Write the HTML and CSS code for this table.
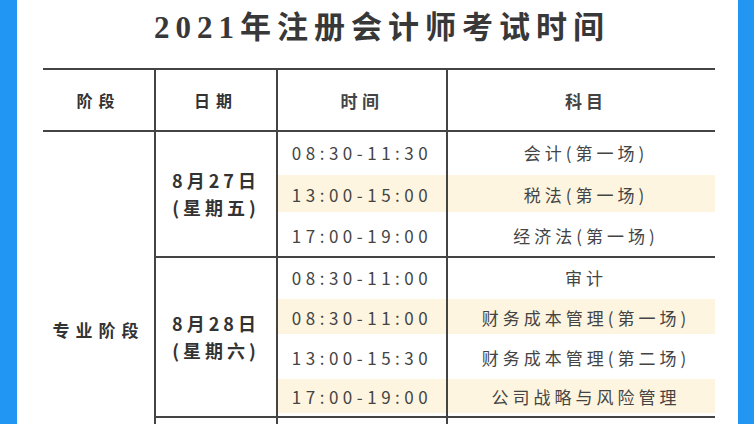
FILE: index.html
```html
<!DOCTYPE html>
<html lang="zh-CN">
<head>
<meta charset="utf-8">
<title>2021年注册会计师考试时间</title>
<link rel="stylesheet" href="styles.css">
</head>
<body>
<div class="frame">
  <div class="edge edge-left"></div>
  <main class="sheet">
    <h1 class="title">2021年注册会计师考试时间</h1>
    <table class="schedule">
      <colgroup>
        <col class="w-stage"><col class="w-date"><col class="w-time"><col class="w-subject">
      </colgroup>
      <thead>
        <tr class="head-row">
          <th class="c-stage">阶段</th>
          <th class="c-date">日期</th>
          <th class="c-time">时间</th>
          <th class="c-subject">科目</th>
        </tr>
      </thead>
      <tbody>
        <tr class="r1">
          <td class="c-stage stage" rowspan="10">专业阶段</td>
          <td class="c-date date" rowspan="3">8月27日<br>(星期五)</td>
          <td class="c-time">08:30-11:30</td>
          <td class="c-subject">会计(第一场)</td>
        </tr>
        <tr class="r1">
          <td class="c-time hl">13:00-15:00</td>
          <td class="c-subject hl">税法(第一场)</td>
        </tr>
        <tr class="r1 group-end">
          <td class="c-time">17:00-19:00</td>
          <td class="c-subject">经济法(第一场)</td>
        </tr>
        <tr class="r2">
          <td class="c-date date" rowspan="4">8月28日<br>(星期六)</td>
          <td class="c-time">08:30-11:00</td>
          <td class="c-subject">审计</td>
        </tr>
        <tr class="r2">
          <td class="c-time hl">08:30-11:00</td>
          <td class="c-subject hl">财务成本管理(第一场)</td>
        </tr>
        <tr class="r2">
          <td class="c-time">13:00-15:30</td>
          <td class="c-subject">财务成本管理(第二场)</td>
        </tr>
        <tr class="r2 group-end">
          <td class="c-time hl">17:00-19:00</td>
          <td class="c-subject hl">公司战略与风险管理</td>
        </tr>
        <tr class="r3">
          <td class="c-date" rowspan="3"></td>
          <td class="c-time"></td>
          <td class="c-subject"></td>
        </tr>
        <tr class="r3">
          <td class="c-time"></td>
          <td class="c-subject"></td>
        </tr>
        <tr class="r3 group-end">
          <td class="c-time"></td>
          <td class="c-subject"></td>
        </tr>
      </tbody>
    </table>
  </main>
  <div class="edge edge-right"></div>
</div>
</body>
</html>
```
FILE: styles.css
```css
html, body {
  margin: 0;
  padding: 0;
  height: 424px;
  overflow: hidden;
  background: #ffffff;
}

body {
  font-family: "Noto Sans CJK SC", "Noto Sans", sans-serif;
  color: #3d3d3d;
}

.frame {
  display: flex;
  height: 424px;
  overflow: hidden;
}

.edge {
  flex: none;
  background: #2196f2;
}

.edge-left {
  width: 17px;
}

.edge-right {
  width: 16px;
}

.sheet {
  flex: 1;
  padding: 0 23px 0 26px;
  background: #ffffff;
}

.title {
  margin: 0;
  height: 68px;
  line-height: 56px;
  padding-left: 6px;
  text-align: center;
  font-family: "Liberation Serif", "Noto Sans CJK SC", serif;
  font-size: 31px;
  font-weight: 700;
  letter-spacing: 6px;
  color: #383838;
}

.schedule {
  width: 100%;
  table-layout: fixed;
  border-collapse: collapse;
  border-top: 2px solid #444;
}

.w-stage { width: 112px; }
.w-date { width: 122px; }
.w-time { width: 170px; }
.w-subject { width: 268px; }

.schedule th,
.schedule td {
  padding: 0;
  text-align: center;
  vertical-align: middle;
}

.c-stage,
.c-date,
.c-time {
  border-right: 2px solid #444;
}

.head-row {
  height: 62px;
  border-bottom: 2px solid #444;
}

.head-row th {
  font-size: 16px;
  font-weight: 700;
  letter-spacing: 6px;
  color: #333;
}

.r1 { height: 42px; }
.r2 { height: 40px; }
.r3 { height: 37px; }

.group-end {
  border-bottom: 2px solid #444;
}

.stage {
  font-size: 17px;
  font-weight: 700;
  letter-spacing: 6px;
  color: #333;
}

.date {
  font-size: 18px;
  font-weight: 700;
  letter-spacing: 4px;
  line-height: 27px;
  color: #333;
}

.schedule .c-time {
  font-size: 17px;
  letter-spacing: 4.5px;
  color: #444;
}

.schedule .c-subject {
  font-size: 17px;
  letter-spacing: 4px;
  padding-left: 9px;
  color: #444;
}

.schedule td.hl {
  background: linear-gradient(#ffffff 2px, #fdf5e0 2px, #fdf5e0 calc(100% - 3px), #ffffff calc(100% - 3px));
}
```
